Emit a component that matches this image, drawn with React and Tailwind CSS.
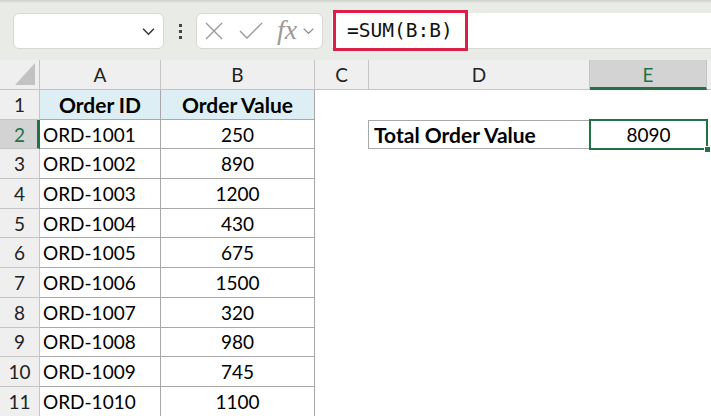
import { Fragment } from 'react'

const cols = ['A', 'B', 'C', 'D', 'E']
const orders = [
  ['ORD-1001', '250'],
  ['ORD-1002', '890'],
  ['ORD-1003', '1200'],
  ['ORD-1004', '430'],
  ['ORD-1005', '675'],
  ['ORD-1006', '1500'],
  ['ORD-1007', '320'],
  ['ORD-1008', '980'],
  ['ORD-1009', '745'],
  ['ORD-1010', '1100'],
]

const cellFont = { fontFamily: 'Lato, "Liberation Sans", sans-serif' }

function Chevron({ className }) {
  return (
    <svg viewBox="0 0 16 10" className={className} fill="none" stroke="currentColor" strokeWidth="1.6">
      <path d="M2 2l6 6 6-6" />
    </svg>
  )
}

function Toolbar() {
  return (
    <div className="relative h-[60px] bg-[#e9ebe6] flex items-start pt-[13px] pl-[13px]">
      <div className="absolute top-0 left-0 right-0 h-[3px] bg-gradient-to-b from-[#cfd1cc] to-[#e4e6e1]" />
      <div className="w-[151px] h-[36px] bg-white border border-[#d6d8d3] rounded-[6px] flex items-center justify-end pr-[7px]">
        <Chevron className="w-[15px] h-[9px] text-[#333]" />
      </div>
      <div className="w-[32px] h-[36px] flex flex-col items-center justify-center gap-[3px]">
        <span className="w-[3px] h-[3px] bg-[#444]" />
        <span className="w-[3px] h-[3px] bg-[#444]" />
        <span className="w-[3px] h-[3px] bg-[#444]" />
      </div>
      <div className="w-[127px] h-[36px] bg-white border border-[#d6d8d3] rounded-[6px] flex items-center pl-[8px] text-[#9a9a9a]">
        <svg viewBox="0 0 18 18" className="w-[18px] h-[18px]" fill="none" stroke="currentColor" strokeWidth="1.4">
          <path d="M1 1l16 16M17 1L1 17" />
        </svg>
        <svg viewBox="0 0 24 18" className="w-[24px] h-[18px] ml-[16px]" fill="none" stroke="currentColor" strokeWidth="1.4">
          <path d="M1 9l7 7L23 1" />
        </svg>
        <span className="ml-[14px] text-[28px] leading-none italic mb-[3px]" style={{ fontFamily: '"Liberation Serif", serif' }}>fx</span>
        <Chevron className="w-[13px] h-[8px] ml-[5px] text-[#888]" />
      </div>
      <div className="flex-1 ml-[9px] h-[36px] bg-white border-b border-[#d6d8d3] relative">
        <div
          className="absolute left-[1px] top-[-3px] w-[135px] h-[41px] border-[3px] border-[#dc1f48] flex items-center pl-[11px] text-[19.5px] text-[#111]"
          style={{ fontFamily: '"DejaVu Sans Mono", "Liberation Mono", monospace' }}
        >
          =SUM(B:B)
        </div>
      </div>
    </div>
  )
}

const gridCols = 'grid grid-cols-[40px_121px_154px_54px_221px_117px_1fr]'

function HeaderRow() {
  return (
    <div className={`${gridCols} h-[30px] bg-[#efefef] text-[19px] leading-none text-[#222]`} style={cellFont}>
      <div className="border-r border-b border-[#c4c4c4] relative">
        <svg viewBox="0 0 20 22" className="absolute left-[15px] top-[3px] w-[20px] h-[22px]">
          <path d="M20 0V22H0Z" fill="#c2c2c2" />
        </svg>
      </div>
      {cols.map(c =>
        c === 'E' ? (
          <div key={c} className="bg-[#d3d3d3] border-b-[3px] border-[#217346] border-r border-r-[#c4c4c4] flex items-center justify-center text-[#217346] pt-[2px]">
            {c}
          </div>
        ) : (
          <div key={c} className="border-r border-b border-[#c4c4c4] flex items-center justify-center">
            {c}
          </div>
        )
      )}
      <div className="border-b border-[#c4c4c4]" />
    </div>
  )
}

function RowHead({ n, active }) {
  return active ? (
    <div className="bg-[#d3d3d3] border-r-[3px] border-r-[#217346] border-b border-b-[#c4c4c4] flex items-center justify-center text-[#217346] pl-[2px]">
      {n}
    </div>
  ) : (
    <div className="bg-[#efefef] border-r border-b border-[#c4c4c4] flex items-center justify-center text-[#222]">
      {n}
    </div>
  )
}

export default function App() {
  return (
    <div className="w-[711px] h-[416px] overflow-hidden bg-white">
      <Toolbar />
      <HeaderRow />
      <div className="text-[19px] leading-none text-black" style={cellFont}>
        <div className={`${gridCols} h-[29.7px]`}>
          <RowHead n={1} />
          <div className="bg-[#ddeef5] border-r border-b border-[#a8a8a8] flex items-center justify-center font-bold text-[21px]">Order ID</div>
          <div className="bg-[#ddeef5] border-r border-b border-[#a8a8a8] flex items-center justify-center font-bold text-[21px]">Order Value</div>
          <div /><div /><div /><div />
        </div>
        {orders.map(([id, val], i) => (
          <div key={id} className={`${gridCols} h-[29.7px]`}>
            <RowHead n={i + 2} active={i === 0} />
            <div className="border-r border-b border-[#a8a8a8] flex items-center pl-[3px]">{id}</div>
            <div className="border-r border-b border-[#a8a8a8] flex items-center justify-center">{val}</div>
            {i === 0 ? (
              <Fragment>
                <div className="border-r border-[#a8a8a8]" />
                <div className="border-t border-b border-[#a8a8a8] flex items-center pl-[5px] font-bold text-[21px]">Total Order Value</div>
                <div className="relative">
                  <div className="absolute inset-[-1px] border-2 border-[#217346] flex items-center justify-center">8090</div>
                  <div className="absolute right-[-4px] bottom-[-4px] w-[7px] h-[7px] bg-[#217346] border border-white" />
                </div>
                <div />
              </Fragment>
            ) : (
              <Fragment>
                <div /><div /><div /><div />
              </Fragment>
            )}
          </div>
        ))}
      </div>
    </div>
  )
}
